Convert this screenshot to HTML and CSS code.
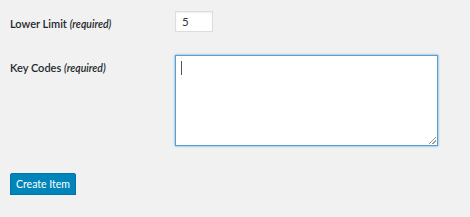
FILE: index.html
```html
<!DOCTYPE html>
<html lang="en">
<head>
    <meta charset="UTF-8">
    <title>Create Item</title>
    <link rel="stylesheet" href="styles.css">
</head>
<body>

    <!-- Item Form -->
    <form class="item-form">
        <div class="form-row row-limit">
            <label class="form-label" for="lower-limit">Lower Limit <span class="req">(required)</span></label>
            <div class="form-field">
                <input type="text" id="lower-limit" class="small-input" value="5">
            </div>
        </div>

        <div class="form-row row-codes">
            <label class="form-label" for="key-codes">Key Codes <span class="req">(required)</span></label>
            <div class="form-field">
                <div class="textarea-box">
                    <span class="caret"></span>
                    <span class="grip"></span>
                </div>
            </div>
        </div>

        <div class="form-submit">
            <button type="button" class="button-primary">Create Item</button>
        </div>
    </form>

</body>
</html>
```

FILE: styles.css
```css
/* Page */
body {
    margin: 0;
    background-color: #f1f1f1;
    color: #23282d;
    font-family: "Lato", "Open Sans", sans-serif;
}

.item-form {
    padding: 11px 10px 0 10px;
}

/* Rows */
.form-row {
    display: flex;
    align-items: flex-start;
}

.form-row .form-field {
    display: flex;
}

.form-label {
    width: 165px;
    font-size: 11px;
    font-weight: 600;
    line-height: 14px;
}

.form-label .req {
    font-style: italic;
    font-size: 10.5px;
}

.row-limit {
    height: 21px;
}

.row-limit .form-label {
    padding-top: 6px;
}

.row-codes {
    margin-top: 23px;
}

.row-codes .form-label {
    padding-top: 6px;
}

/* Inputs */
.small-input {
    display: block;
    box-sizing: border-box;
    width: 38px;
    height: 21px;
    margin: 0;
    padding: 0 6px;
    border: 1px solid #dddddd;
    box-shadow: inset 0 1px 2px rgba(0, 0, 0, 0.07);
    background: #fff;
    color: #32373c;
    font-family: inherit;
    font-size: 11.5px;
    outline: none;
}

.textarea-box {
    position: relative;
    box-sizing: border-box;
    width: 263px;
    height: 91px;
    border: 1px solid #5b9dd9;
    box-shadow: 0 0 2px rgba(30, 140, 190, 0.8);
    background: #fff;
}

.caret {
    position: absolute;
    top: 5px;
    left: 5px;
    width: 1px;
    height: 14px;
    background: #555;
}

.grip {
    position: absolute;
    right: 1px;
    bottom: 1px;
    width: 7px;
    height: 7px;
    background: linear-gradient(135deg, transparent 45%, #999 45%, #999 55%, transparent 55%, transparent 70%, #999 70%, #999 80%, transparent 80%);
}

/* Submit */
.form-submit {
    display: flex;
    margin-top: 27px;
}

.button-primary {
    box-sizing: border-box;
    height: 22px;
    width: 66px;
    padding: 0;
    border: 1px solid #0073aa;
    border-radius: 2px;
    background: #0085ba;
    box-shadow: 0 1px 0 #006799;
    color: #fff;
    font-family: inherit;
    font-size: 10.5px;
    line-height: 20px;
    cursor: pointer;
}
```
